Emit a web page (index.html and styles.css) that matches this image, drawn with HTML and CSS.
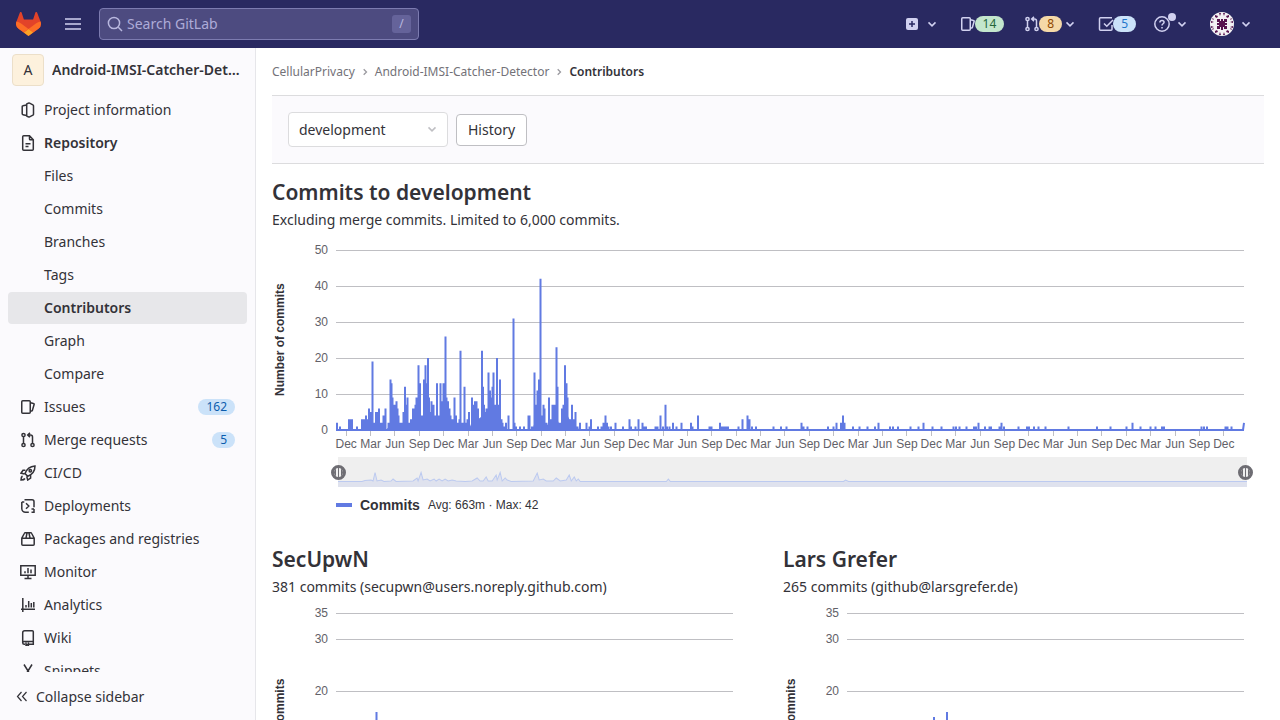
FILE: index.html
```html
<!DOCTYPE html>
<html lang="en">
<head>
<meta charset="utf-8">
<meta name="viewport" content="width=device-width, initial-scale=1">
<title>Contributors · Android-IMSI-Catcher-Detector · GitLab</title>
<link rel="stylesheet" href="styles.css">
</head>
<body>
<svg class="sprite" aria-hidden="true">
  <symbol id="chevron" viewBox="0 0 16 16"><path d="M4.500 6.400 8 9.900l3.500-3.500"/></symbol>
  <symbol id="angle" viewBox="0 0 16 16"><path d="M6.700 5.200 9.500 8 6.700 10.800"/></symbol>
  <symbol id="issues" viewBox="0 0 16 16"><rect x="1.75" y="1.75" width="8.5" height="12.5" rx="1"/><path d="M10.5 3.7l3 .8c.5.1.8.6.6 1.1l-1.8 6.1-1.8.6"/></symbol>
  <symbol id="merge" viewBox="0 0 16 16"><circle cx="3.5" cy="3" r="1.6"/><circle cx="3.5" cy="13" r="1.6"/><circle cx="12.5" cy="13" r="1.6"/><path d="M3.5 4.6v6.8M12.5 11.4V5c0-1.2-.8-2-2-2H8.2M10 .9 7.7 3 10 5.1"/></symbol>
</svg>
<header class="navbar">
  <a class="logo" href="#" aria-label="GitLab">
    <svg viewBox="0 0 25 24" width="25" height="24"><path fill="#e24329" d="M24.5 9.5v-.1L21.1.5a.9.9 0 0 0-1.7.1l-2.3 7H7.9l-2.3-7A.9.9 0 0 0 3.9.5L.5 9.400a6.300 6.300 0 0 0 2.100 7.300l9.900 7.300 9.900-7.300a6.300 6.300 0 0 0 2.100-7.200z"/><path fill="#fc6d26" d="M24.500 9.500v-.1a11.400 11.400 0 0 0-4.600 2.100l-7.400 5.600 4.700 3.500 5.200-3.900a6.300 6.300 0 0 0 2.100-7.200z"/><path fill="#fca326" d="m7.800 20.600 4.700 3.400 4.700-3.400-4.700-3.500z"/><path fill="#fc6d26" d="M5.100 11.500A11.400 11.400 0 0 0 .5 9.400a6.300 6.300 0 0 0 2.100 7.300l5.200 3.900 4.700-3.500z"/></svg>
  </a>
  <button class="menu" type="button" aria-label="Menu"><svg class="icon" viewBox="0 0 16 16"><path d="M0 3h16M0 8h16M0 13h16"/></svg></button>
  <div class="search">
    <svg class="icon" viewBox="0 0 16 16"><circle cx="7" cy="7" r="5.600"/><path d="m11.300 11.300 3.700 3.700"/></svg>
    <input type="text" placeholder="Search GitLab" aria-label="Search GitLab">
    <kbd>/</kbd>
  </div>
  <nav class="tools" aria-label="Toolbar">
    <button type="button" class="tool new" aria-label="Create new"><svg class="icon" viewBox="0 0 16 16"><rect class="solid" x="2" y="2" width="12" height="12" rx="2"/><path class="cut" d="M8 5v6M5 8h6"/></svg><svg class="icon caret"><use href="#chevron"/></svg></button>
    <a class="tool" href="#" aria-label="Issues"><svg class="icon"><use href="#issues"/></svg><span class="pill green">14</span></a>
    <button type="button" class="tool" aria-label="Merge requests"><svg class="icon"><use href="#merge"/></svg><span class="pill orange">8</span><svg class="icon caret"><use href="#chevron"/></svg></button>
    <a class="tool" href="#" aria-label="To-Do List"><svg class="icon" viewBox="0 0 16 16"><path d="M14 9v4.200c0 .6-.4 1-1 1H2.500c-.6 0-1-.4-1-1V2.800c0-.6.4-1 1-1H14M6 7.500l2.800 2.800L15 4"/></svg><span class="pill blue">5</span></a>
    <button type="button" class="tool help" aria-label="Help"><svg class="icon" viewBox="0 0 16 16"><circle cx="8" cy="8" r="7.200"/><path d="M5.900 6.400c0-1.200.9-2 2.100-2s2.100.8 2.100 1.900c0 1.400-2.100 1.500-2.100 3.100M8 11v1.400"/></svg><span class="dot"></span><svg class="icon caret"><use href="#chevron"/></svg></button>
    <button type="button" class="tool user" aria-label="Account"><svg class="avatar" viewBox="0 0 24 24"><circle cx="12" cy="12" r="12" fill="#f3f1f3"/><path fill="#59144f" d="M7 7h3v2h1V7h2v2h1V7h3v3h-2v1h2v2h-2v1h2v3h-3v-2h-1v3h-2v-3h-1v2H7v-3h2v-1H7v-2h2v-1H7zM5 3l3 1-1 2-2-1zM19 3l-3 1 1 2 2-1zM5 21l3-1-1-2-2 1zM19 21l-3-1 1-2 2 1zM1 9l3 1-3 1zM23 9l-3 1 3 1zM1 14l3 1-3 1zM23 14l-3 1 3 1zM9 1l1 3 1-3zM15 1l-1 3-1-3zM9 23l1-3 1 3zM15 23l-1-3-1 3zM2 6l2 1-1 1zM22 6l-2 1 1 1zM2 18l2-1-1-1zM22 18l-2-1 1-1z"/></svg><svg class="icon caret"><use href="#chevron"/></svg></button>
  </nav>
</header>
<div class="layout">
  <aside class="sidebar">
    <div class="sidebar-scroll">
      <a class="project" href="#"><span class="project-avatar">A</span><span class="project-name">Android-IMSI-Catcher-Detector</span></a>
      <ul class="nav">
        <li><a href="#"><svg class="icon" viewBox="0 0 16 16"><path d="M6.500 2.900 3 3.700c-.5.1-.8.4-.8.900v7.200c0 .5.300.8.800.9l3.500.8"/><path d="M6.700 2.300c0-.5.300-.8.800-.9l1.300-.3c.3-.1.600 0 .8.100l3.300 1.600c.400.2.6.500.6.900v8.600c0 .4-.2.700-.6.900l-3.300 1.600c-.2.100-.5.200-.8.100l-1.300-.3c-.5-.1-.8-.4-.8-.9z"/></svg><span>Project information</span></a></li>
        <li><a class="strong" href="#"><svg class="icon" viewBox="0 0 16 16"><path d="M9.500.8H3.700c-.5 0-1 .4-1 1v12.400c0 .5.500 1 1 1h8.600c.5 0 1-.5 1-1V4.700zV4c0 .5.300.8.800.8h3M5.500 8.700h5M5.500 11.500h3"/></svg><span>Repository</span></a></li>
        <li><a class="sub" href="#"><span>Files</span></a></li>
        <li><a class="sub" href="#"><span>Commits</span></a></li>
        <li><a class="sub" href="#"><span>Branches</span></a></li>
        <li><a class="sub" href="#"><span>Tags</span></a></li>
        <li><a class="sub strong active" href="#"><span>Contributors</span></a></li>
        <li><a class="sub" href="#"><span>Graph</span></a></li>
        <li><a class="sub" href="#"><span>Compare</span></a></li>
        <li><a href="#"><svg class="icon"><use href="#issues"/></svg><span>Issues</span><b class="pill blue">162</b></a></li>
        <li><a href="#"><svg class="icon"><use href="#merge"/></svg><span>Merge requests</span><b class="pill blue">5</b></a></li>
        <li><a href="#"><svg class="icon" viewBox="0 0 16 16"><path d="M5 8.500c1.500-4 4.500-7 10-7.500 0 5.500-3 8.500-7.200 10.300zM5.300 5.300H3L1 8.200l3.500.9M10.600 10.300V13l-2.900 2-1-3.600M2.500 11c-1.300.8-1.500 2.500-1.500 4 1.500 0 3.200-.2 4-1.500"/><circle cx="10.300" cy="5.700" r="1.200"/></svg><span>CI/CD</span></a></li>
        <li><a href="#"><svg class="icon" viewBox="0 0 16 16"><path d="M4.500 1.800H12a2 2 0 0 1 2 2v5.500M11.500 14.200H14V11M1.800 4v6.500a3.700 3.700 0 0 0 3.700 3.700h3.300M1.800 4h2.500M14 11h-2.500M6 5.300 8.800 8 6 10.700"/></svg><span>Deployments</span></a></li>
        <li><a href="#"><svg class="icon" viewBox="0 0 16 16"><path d="M1.800 7.200 4.300 2.500c.2-.4.500-.700 1-.7h5.400c.5 0 .8.300 1 .7l2.500 4.700v6c0 .6-.4 1-1 1H2.800c-.6 0-1-.4-1-1zh12.400M6 7l1-5M10 7 9 2"/></svg><span>Packages and registries</span></a></li>
        <li><a href="#"><svg class="icon" viewBox="0 0 16 16"><path d="M.8 1.800h14.400v9.500H.8zM8 11.500v3M4.500 14.500h7M5 7.300v1.900M8 4v5.200M11 5.500v3.700"/></svg><span>Monitor</span></a></li>
        <li><a href="#"><svg class="icon" viewBox="0 0 16 16"><path d="M2.800 1v14M1 12.300h14M6 8v2.500M8.700 4v6.500M11.300 6v4.500M13.800 5v5.500"/></svg><span>Analytics</span></a></li>
        <li><a href="#"><svg class="icon" viewBox="0 0 16 16"><path d="M13.300 11.500V1.800c0-.5-.4-1-1-1H4.700c-1.100 0-2 .9-2 2v10c0 .9.600 1.500 1.500 1.500H5M2.700 12.800c0-.8.500-1.300 1.300-1.300h9.300v2.800H9M6 12.500v3.200l1.200-1 1.200 1v-3.200"/></svg><span>Wiki</span></a></li>
        <li><a href="#"><svg class="icon" viewBox="0 0 16 16"><path d="M4 1.500 8 8l4-6.500M8 8l-2.500 4M8 8l2.500 4"/><circle cx="4.500" cy="13" r="1.700"/><circle cx="11.500" cy="13" r="1.700"/></svg><span>Snippets</span></a></li>
      </ul>
    </div>
    <button class="collapse" type="button"><svg viewBox="0 0 12 12"><path d="M5.500 1 1.500 5.500l4 4.500M10.500 1l-4 4.500 4 4.500"/></svg><span>Collapse sidebar</span></button>
  </aside>
  <main class="content">
    <nav class="breadcrumb" aria-label="Breadcrumbs"><a href="#">CellularPrivacy</a><svg class="sep"><use href="#angle"/></svg><a href="#">Android-IMSI-Catcher-Detector</a><svg class="sep"><use href="#angle"/></svg><a class="here" href="#">Contributors</a></nav>
    <div class="filter">
      <div class="select"><select aria-label="Branch"><option>development</option></select><svg class="icon"><use href="#chevron"/></svg></div>
      <button class="history" type="button">History</button>
    </div>
    <section class="summary">
      <h1>Commits to development</h1>
      <p>Excluding merge commits. Limited to 6,000 commits.</p>
      <div class="chart">
        <div class="axis-title">Number of commits</div>
        <div class="y-axis"><span>50</span><span>40</span><span>30</span><span>20</span><span>10</span><span>0</span></div>
        <svg class="plot" viewBox="0 0 908 180" preserveAspectRatio="none" role="img" aria-label="Commits over time">
          <path class="grid" d="M0 .5H908M0 36.500H908M0 72.500H908M0 108.500H908M0 144.500H908"/>
          <g transform="translate(0 180) scale(1 -3.600)">
            <path class="mass" d="M26 0L28 1 33 2 37 1 42 2 46 1 50 0 53 1 56 4 59 3 63 2 66 1 70 3 74 1 79 3 83 4 86 2 90 5 94 3 98 2 103 3 108 5 113 4 117 1 120 2 123 0 127 1 134 1 137 3 142 3 147 4 151 2 156 5 161 4 166 1 170 0 196 0 200 3 205 4 209 2 214 1 220 4 224 1 230 5 235 2 240 1 244 0z"/>
            <path class="series" d="M0 0H908M1 0V2M4 0V1M13 0V3M14.500 0V3M16 0V3M21 0V1M26 0V3M28 0V3M30 0V4M31 0V3M33 0V6M34.500 0V5M36.500 0V19M38 0V2M40 0V5M41.500 0V5M43 0V6M44.500 0V2M46 0V2M47.500 0V4M49.500 0V6M52.500 0V2M54.500 0V14M55.500 0V13M56.500 0V9M57.500 0V7M58.500 0V7M60.500 0V8M61.500 0V6M62.500 0V4M64 0V2M66 0V2M67.500 0V5M69 0V12M70 0V7M71.500 0V9M73 0V2M75 0V3M77 0V6M78.500 0V6M79.500 0V7M80.500 0V9M82.500 0V18M84 0V13M85 0V4M86.500 0V4M88 0V14M89.500 0V18M90.500 0V13M92 0V20M93 0V9M94.500 0V5M95.500 0V8M97.500 0V7M99 0V4M101 0V13M102.500 0V4M104.500 0V13M106.500 0V8M107.500 0V13M109.500 0V26M110.500 0V9M112 0V8M113.500 0V6M114.500 0V4M116 0V3M117.500 0V3M118.500 0V9M120 0V4M122 0V2M123.500 0V3M124.500 0V22M126.500 0V2M128.500 0V12M130 0V2M131.500 0V3M133 0V5M136 0V9M137.500 0V7M139 0V8M140.500 0V8M142 0V6M143.500 0V3M144.500 0V3M146 0V22M147 0V12M148 0V7M149.500 0V5M150.500 0V6M152.500 0V16M154 0V11M155.500 0V9M156.500 0V12M157.500 0V16M159 0V7M161 0V20M162.500 0V7M164 0V14M165.500 0V3M166.500 0V2M168 0V1M170 0V2M172.500 0V4M177.500 0V31M178.500 0V2M180 0V1M184 0V1M188 0V1M192.500 0V4M193.500 0V4M196 0V1M198.500 0V16M200.500 0V7M201.500 0V11M203 0V14M204.500 0V42M206 0V4M207.500 0V7M208.500 0V6M210.500 0V2M213 0V9M214.500 0V3M216.500 0V7M218.500 0V7M220.500 0V23M221.500 0V12M223 0V2M224.500 0V2M226 0V6M227.500 0V7M229 0V18M230.500 0V13M231.500 0V9M233.500 0V3M234.500 0V3M236 0V7M237.500 0V3M239.500 0V5M241.500 0V1M244 0V2M250.500 0V2M253.500 0V1M255 0V3M262 0V1M265.500 0V1M267.500 0V2M269.500 0V4M271 0V2M272.500 0V1M275 0V1M279.500 0V2M287 0V1M293.500 0V3M295 0V1M299.500 0V1M302.500 0V3M306.500 0V2M308.500 0V1M310 0V1M319.500 0V1M321.500 0V1M324.500 0V4M327 0V1M329.500 0V7M331 0V1M333.500 0V1M337 0V2M340.500 0V1M345.500 0V2M355 0V2M356.500 0V1M362 0V4M373.500 0V1M375.500 0V1M384 0V2M386 0V1M388 0V1M390 0V1M392 0V1M402.500 0V1M406.500 0V3M411.500 0V4M413.500 0V3M416 0V1M420 0V1M437.500 0V1M445 0V1M450.500 0V1M465.500 0V2M467.500 0V1M471.500 0V1M492 0V1M497.500 0V1M500.500 0V2M505 0V2M507 0V4M508.500 0V2M517 0V1M523.500 0V1M531.500 0V1M539 0V1M542.500 0V2M554 0V1M557 0V1M562 0V1M574.500 0V1M582.500 0V1M587.500 0V2M596.500 0V1M605.500 0V1M617.500 0V1M620 0V1M623.500 0V1M630.500 0V1M638 0V1M640 0V1M642.500 0V2M649 0V1M653.500 0V1M655 0V1M663.500 0V1M665.500 0V2M668 0V1M682.500 0V1M691 0V1M693 0V1M698 0V1M702.500 0V1M709.500 0V1M732.500 0V1M761 0V1M774.500 0V1M790.500 0V1M796.500 0V2M804.500 0V1M814.500 0V1M819.500 0V1M826 0V1M828 0V1M865.500 0V1M868 0V1M871 0V1M889.500 0V1M891.500 0V1M895.500 0V1M907 0L908 2"/>
          </g>
        </svg>
        <div class="x-axis"><span>Dec</span><span>Mar</span><span>Jun</span><span>Sep</span><span>Dec</span><span>Mar</span><span>Jun</span><span>Sep</span><span>Dec</span><span>Mar</span><span>Jun</span><span>Sep</span><span>Dec</span><span>Mar</span><span>Jun</span><span>Sep</span><span>Dec</span><span>Mar</span><span>Jun</span><span>Sep</span><span>Dec</span><span>Mar</span><span>Jun</span><span>Sep</span><span>Dec</span><span>Mar</span><span>Jun</span><span>Sep</span><span>Dec</span><span>Mar</span><span>Jun</span><span>Sep</span><span>Dec</span><span>Mar</span><span>Jun</span><span>Sep</span><span>Dec</span></div>
        <div class="zoom">
          <svg class="overview" viewBox="0 0 908 30" preserveAspectRatio="none" aria-hidden="true"><path d="M-1 31V24.500H24L27 23.500 33 23 35 24 37 15.500 39 24 43 23 46 24.500 53 24 55 22 58 24.500 75 24 79 21 80 24 83 15.500 85 23 89 22 92 24 96 22 98 24 101 22 104 24 107 22 110 24 114 23 118 24 127 24.500 134 24 139 21 142 24 145 24 148 20 150 24 154 24 158 18 159 23 162 15.500 164 24 167 21 169 23 173 24.500 195 24 199 16 201 23 205 22 208 24 215 24 218 21 222 24 228 23 231 18 233 24 236 20 238 24 240 22 242 24.500H328L330 22 332 24.500H505L507 23 510 24.500H909V31z"/></svg>
          <input type="range" min="0" max="100" value="0" aria-label="Range start">
          <input type="range" min="0" max="100" value="100" aria-label="Range end">
        </div>
        <div class="legend"><i class="swatch"></i><strong>Commits</strong><span>Avg: 663m · Max: 42</span></div>
      </div>
    </section>
    <div class="authors">
      <section>
        <h2>SecUpwN</h2>
        <p>381 commits (secupwn@users.noreply.github.com)</p>
        <div class="chart small">
          <div class="axis-title">Commits</div>
          <div class="y-axis"><span>35</span><span>30</span><span>20</span><span>10</span><span>0</span></div>
          <svg class="plot" viewBox="0 0 397 182" preserveAspectRatio="none" role="img" aria-label="SecUpwN commits"><path class="grid" d="M0 .5H397M0 26.500H397M0 78.500H397M0 130.500H397"/><path class="series" d="M0 182H397M40.500 182V99"/></svg>
        </div>
      </section>
      <section>
        <h2>Lars Grefer</h2>
        <p>265 commits (github@larsgrefer.de)</p>
        <div class="chart small">
          <div class="axis-title">Commits</div>
          <div class="y-axis"><span>35</span><span>30</span><span>20</span><span>10</span><span>0</span></div>
          <svg class="plot" viewBox="0 0 397 182" preserveAspectRatio="none" role="img" aria-label="Lars Grefer commits"><path class="grid" d="M0 .5H397M0 26.500H397M0 78.500H397M0 130.500H397"/><path class="series" d="M0 182H397M87 182V104M100 182V99"/></svg>
        </div>
      </section>
    </div>
  </main>
</div>
</body>
</html>
```
FILE: styles.css
```css
* { box-sizing: border-box; }
body {
  margin: 0;
  height: 100vh;
  display: flex;
  flex-direction: column;
  overflow: hidden;
  background: #fff;
  color: #333238;
  font: 14px/20px "Noto Sans", sans-serif;
}
a { color: inherit; text-decoration: none; }
button, input, select { font: inherit; color: inherit; }
button { border: 0; padding: 0; background: none; }
h1, h2, p, ul { margin: 0; padding: 0; }
.sprite { position: absolute; width: 0; height: 0; }
.icon { width: 16px; height: 16px; flex: none; fill: none; stroke: currentColor; stroke-width: 1.5; }

/* Top bar */
.navbar {
  flex: none;
  display: flex;
  align-items: center;
  height: 48px;
  padding: 0 26px 0 16px;
  background: #292961;
  color: #d1d1f0;
}
.logo, .menu { display: flex; }
.menu { margin: 0 18px 0 24px; }
.search {
  flex: 0 1 320px;
  display: flex;
  align-items: center;
  gap: 4px;
  height: 32px;
  padding: 0 7px;
  border: 1px solid #7c7bb0;
  border-radius: 4px;
  background: #4d4b80;
  color: #b9b8df;
}
.search input { flex: 1; min-width: 0; border: 0; padding: 0; background: none; outline: 0; }
.search input::placeholder { color: #adabd8; opacity: 1; }
.search kbd {
  width: 19px;
  border-radius: 3px;
  background: #65639a;
  font: 12px/18px "Noto Sans", sans-serif;
  text-align: center;
}
.tools { display: flex; align-items: center; margin-left: auto; }
.tool { display: flex; align-items: center; margin-left: 20px; }
.new .caret, .help .caret, .user .caret { margin-left: 4px; }
.help { position: relative; margin-left: 18px; }
.dot { position: absolute; left: 14px; top: -3px; width: 8px; height: 8px; border-radius: 50%; background: #d1d1f0; }
.avatar { width: 24px; height: 24px; }
.solid { fill: currentColor; stroke: none; }
.cut { stroke: #292961; }
.pill { padding: 0 8px; border-radius: 8px; font-size: 12px; font-weight: 400; line-height: 16px; }
.tool .pill { margin-left: -1px; }
.green { background: #c3e6cd; color: #24663b; }
.orange { background: #f5d9a8; color: #8f4700; }
.blue { background: #cbe2f9; color: #1f75cb; }
.sidebar .blue { color: #0b5cad; }

/* Sidebar */
.layout { flex: 1; min-height: 0; display: flex; }
.sidebar {
  flex: 0 0 256px;
  min-width: 0;
  display: flex;
  flex-direction: column;
  overflow: hidden;
  border-right: 1px solid #e6e6ea;
  background: #fbfafd;
}
.sidebar-scroll { flex: 1; min-height: 0; overflow: auto; scrollbar-width: none; padding: 6px 8px 0; }
.project { display: flex; align-items: center; gap: 8px; padding: 0 4px; }
.project-avatar {
  flex: none;
  width: 32px;
  border: 1px solid #ecdfc9;
  border-radius: 4px;
  background: #fdf1dd;
  line-height: 30px;
  text-align: center;
}
.project-name { min-width: 0; overflow: hidden; text-overflow: ellipsis; white-space: nowrap; font-weight: 600; }
.nav { display: grid; gap: 1px; margin-top: 8px; list-style: none; }
.nav a { display: flex; align-items: center; gap: 8px; height: 32px; padding: 0 12px; border-radius: 4px; }
.nav a.sub { padding-left: 36px; }
.nav .strong { font-weight: 600; }
.nav .active { background: #e7e7ea; }
.nav .pill { margin-left: auto; }
.collapse { flex: none; display: flex; align-items: center; gap: 8px; height: 48px; padding: 2px 16px 0; }
.collapse svg { width: 12px; height: 12px; fill: none; stroke: currentColor; stroke-width: 1.2; }

/* Content */
.content { flex: 1; min-width: 0; overflow: auto; scrollbar-width: none; padding: 0 16px; }
.breadcrumb { display: flex; align-items: center; height: 47px; color: #737278; font-size: 12px; }
.sep { width: 16px; height: 16px; margin: 0 2px; fill: none; stroke: #9a999f; stroke-width: 1.3; }
.breadcrumb .here { color: #333238; font-weight: 600; }
.filter {
  display: flex;
  align-items: center;
  gap: 8px;
  padding: 16px;
  border: solid #dcdcde;
  border-width: 1px 0;
  background: #fbfafd;
}
.select { position: relative; }
.select select {
  display: block;
  width: 160px;
  height: 35px;
  padding: 0 32px 0 10px;
  border: 1px solid #dcdcde;
  border-radius: 4px;
  background: #fff;
  appearance: none;
}
.select .icon { position: absolute; right: 8px; top: 9px; color: #bfbfc3; pointer-events: none; }
.history { height: 32px; padding: 0 11px; border: 1px solid #bfbfc3; border-radius: 4px; background: #fff; }
h1, h2 { font-size: 21px; line-height: 24px; font-weight: 600; }
.summary { padding-top: 16px; }
.summary p, .authors p { margin-top: 6px; }

/* Charts */
.chart {
  display: grid;
  grid-template-columns: 16px 40px 1fr;
  column-gap: 4px;
  margin: 20px 20px 0 0;
  font: 12px/14px "Liberation Sans", sans-serif;
}
.axis-title { writing-mode: vertical-rl; transform: rotate(180deg); text-align: center; font-weight: 700; line-height: 16px; }
.y-axis { display: grid; grid-template-rows: repeat(5, 36px) 0; padding-right: 4px; color: #626168; text-align: right; }
.y-axis span { margin-top: -7px; height: 14px; }
.plot { width: 100%; height: 180px; overflow: visible; }
.grid { stroke: #bfbfc3; fill: none; vector-effect: non-scaling-stroke; }
.mass { fill: #617ae2; }
.series { stroke: #617ae2; stroke-width: 2; fill: none; vector-effect: non-scaling-stroke; }
.x-axis {
  grid-column: 3;
  display: grid;
  grid-template-columns: repeat(37, minmax(0, 1fr));
  margin: 1px 8px 0 -2px;
  color: #626168;
}
.x-axis span { display: flex; flex-direction: column; align-items: center; }
.x-axis span::before { content: ""; width: 1px; height: 5px; margin-bottom: 1px; background: #bfbfc3; }
.zoom { grid-column: 3; position: relative; height: 30px; margin: 6px -3px 0 2px; background: #efefef; }
.overview { display: block; width: 100%; height: 30px; overflow: hidden; fill: #dfe2ee; stroke: #bccaf0; }
.zoom input {
  position: absolute;
  left: -7px;
  top: 0;
  width: calc(100% + 13px);
  height: 30px;
  margin: 0;
  background: none;
  appearance: none;
  pointer-events: none;
}
.zoom input::-webkit-slider-thumb {
  appearance: none;
  width: 15px;
  height: 15px;
  border: 3px solid #6e6d73;
  border-radius: 50%;
  background: linear-gradient(90deg, #6e6d73 2px, #efefef 2px 4px, #6e6d73 4px 5px, #efefef 5px 7px, #6e6d73 7px) padding-box;
  pointer-events: auto;
}
.legend { grid-column: 3; display: flex; align-items: center; gap: 8px; margin-top: 10px; line-height: 16px; }
.legend strong { font-size: 14px; }
.swatch { width: 16px; height: 4px; background: #617ae2; }
.authors { display: grid; grid-template-columns: 1fr 1fr; gap: 30px; margin-top: 34px; }
.small { margin: 16px 20px 0 0; }
.small .y-axis { grid-template-rows: 26px 52px 52px 52px 0; }
.small .plot { height: 182px; }
```
